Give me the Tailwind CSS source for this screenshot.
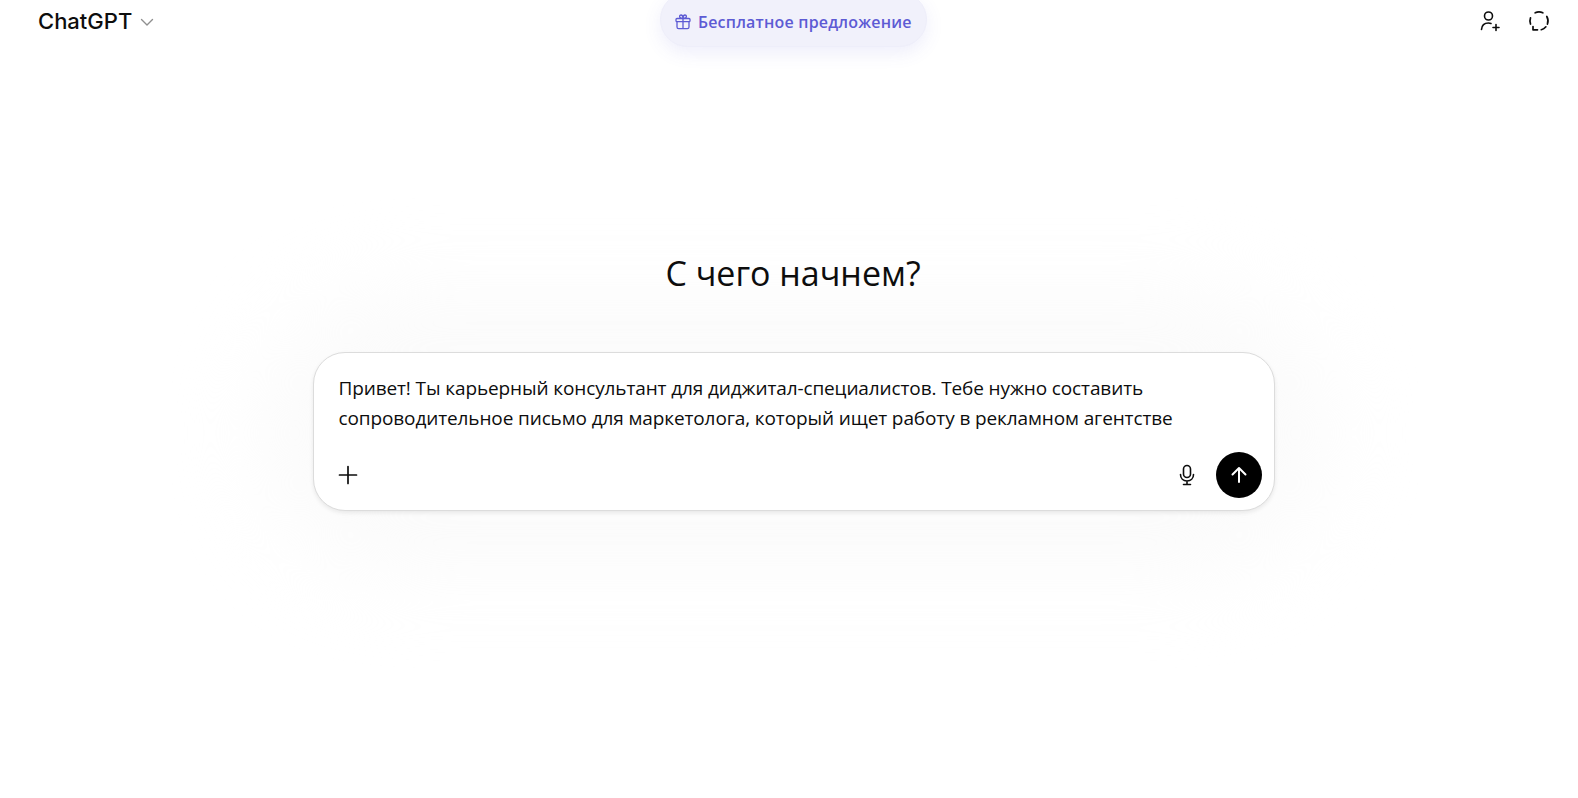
<!DOCTYPE html>
<html lang="ru">
<head>
    <meta charset="UTF-8">
    <meta name="viewport" content="width=device-width, initial-scale=1.0">
    <title>ChatGPT</title>
    <script src="https://cdn.jsdelivr.net/npm/@tailwindcss/browser@4"></script>
</head>
<body class="bg-white overflow-hidden font-['Open_Sans',sans-serif] text-[#0d0d0d]">
    <div class="h-[798px] w-[1578px] flex flex-col relative overflow-hidden">
        <!-- top bar -->
        <header class="h-[48px] flex items-start justify-between pl-[38px] pr-[28px] relative">
            <div class="flex items-center gap-[7px] h-[42px]">
                <span class="font-['Inter',sans-serif] text-[22px] leading-[28px] font-medium">ChatGPT</span>
                <svg class="w-[16px] h-[16px] text-[#8f8f8f] mt-[2px]" viewBox="0 0 16 16" fill="none" stroke="currentColor" stroke-width="1.4" stroke-linecap="round" stroke-linejoin="round"><path d="M2.500 5.500 8 11l5.500-5.500"/></svg>
            </div>
            <div class="absolute left-[660px] top-[-8px] w-[267px] h-[55px] rounded-full bg-[#f1f1fb] border border-[#eeeefa] shadow-[0_6px_18px_rgba(90,90,220,0.10)] flex items-center pl-[13px] gap-[6px] pt-[4px] text-[#5d5bd4]">
                <svg class="w-[18px] h-[18px]" viewBox="0 0 18 18" fill="none" stroke="currentColor" stroke-width="1.3" stroke-linecap="round" stroke-linejoin="round"><rect x="2" y="5.500" width="14" height="3.200" rx="1"/><path d="M3 8.700V14a1.600 1.600 0 0 0 1.600 1.600h8.800A1.600 1.600 0 0 0 15 14V8.700M9 5.500v10M9 5.500C7 5.500 5.600 4.600 5.600 3.400 5.600 2.400 6.400 2 7 2 8.300 2 9 3.600 9 5.500Zm0 0c2 0 3.400-.9 3.400-2.100 0-1-.8-1.400-1.400-1.400C9.700 2 9 3.600 9 5.500Z"/></svg>
                <span class="text-[16px] leading-[24px] font-semibold tracking-[0.2px]">Бесплатное предложение</span>
            </div>
            <div class="flex items-center gap-[27px] h-[42px]">
                <svg class="w-[22px] h-[22px]" viewBox="0 0 22 22" fill="none" stroke="currentColor" stroke-width="1.6" stroke-linecap="round"><circle cx="9.500" cy="6" r="4"/><path d="M2.500 19.500c.3-4 3-6.500 7-6.500 1 0 1.800.1 2.500.4M17 14.500v6M14 17.500h6"/></svg>
                <svg class="w-[22px] h-[22px]" viewBox="0 0 22 22" fill="none" stroke="currentColor" stroke-width="1.700" stroke-linecap="round" stroke-linejoin="round"><path d="M7.200 2.840a9 9 0 0 1 7.600 0M18.800 6.500a9 9 0 0 1 .66 7.580M17.900 16.800a9 9 0 0 1-4.600 2.900M9.500 19.800H5V16.500M2.500 14a9 9 0 0 1 0-6.100"/></svg>
            </div>
        </header>

        <!-- centre -->
        <main class="flex flex-col items-center pl-[9px] relative">
            <div class="absolute left-[260px] top-[245px] w-[1070px] h-[280px] rounded-full bg-[#fbfbfb] blur-[40px]"></div>
            <h1 class="relative mt-[203px] text-[34px] leading-[44px] font-normal -ml-[1px]">С чего начнем?</h1>
            <div class="relative mt-[57px] w-[962px] h-[159px] rounded-[32px] bg-white border border-[#dcdcdc] shadow-[0_2px_4px_rgba(0,0,0,0.08)] pl-[25px] pr-[12px] pt-[20px] flex flex-col">
                <p class="text-[19px] leading-[30px] tracking-[-0.115px]">Привет! Ты карьерный консультант для диджитал-специалистов. Тебе нужно составить<br>сопроводительное письмо для маркетолога, который ищет работу в рекламном агентстве</p>
                <div class="flex items-center justify-between mt-[19px]">
                    <svg class="w-[20px] h-[20px] -ml-[1px]" viewBox="0 0 20 20" fill="none" stroke="currentColor" stroke-width="1.700" stroke-linecap="round"><path d="M10 1.500v17M1.500 10h17"/></svg>
                    <div class="flex items-center gap-[18px]">
                        <svg class="w-[22px] h-[22px]" viewBox="0 0 22 22" fill="none" stroke="currentColor" stroke-width="1.600" stroke-linecap="round"><rect x="7.500" y="1.500" width="7" height="12" rx="3.500"/><path d="M4.500 10.500c0 4 2.800 6.500 6.500 6.500s6.500-2.500 6.500-6.500M11 17v3M7.500 20.500h7"/></svg>
                        <div class="w-[46px] h-[46px] rounded-full bg-black flex items-center justify-center">
                            <svg class="w-[20px] h-[20px] text-white" viewBox="0 0 20 20" fill="none" stroke="currentColor" stroke-width="2" stroke-linecap="round" stroke-linejoin="round"><path d="M10 17V3.200M3.500 9.500 10 3l6.500 6.500"/></svg>
                        </div>
                    </div>
                </div>
            </div>
        </main>
    </div>
</body>
</html>
